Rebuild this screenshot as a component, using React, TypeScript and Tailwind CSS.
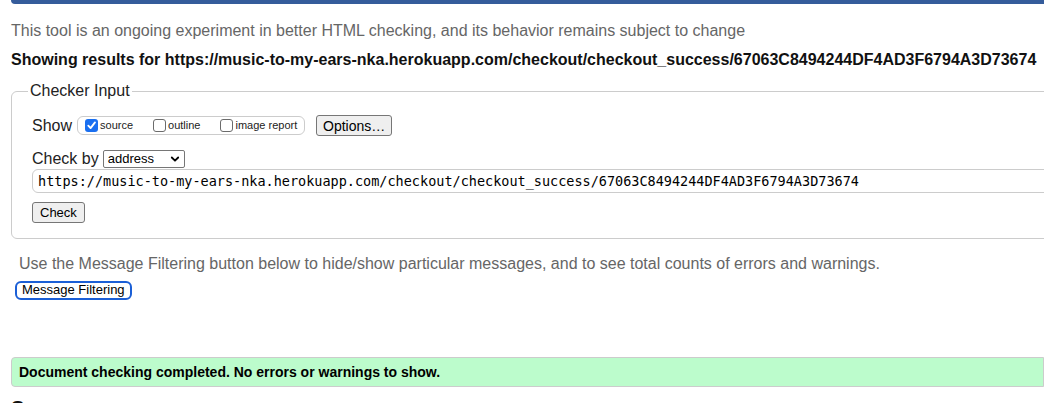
import React from 'react';

const url = 'https://music-to-my-ears-nka.herokuapp.com/checkout/checkout_success/67063C8494244DF4AD3F6794A3D73674';

const Box = ({ checked, label }: { checked?: boolean; label: string }) => (
  <span className="flex items-center">
    {checked
      ? (
          <span className="flex size-[13px] items-center justify-center rounded-[3px] bg-[#1a6ff0]">
            <svg viewBox="0 0 12 12" className="size-[11px]" fill="none" stroke="white" strokeWidth="2" strokeLinecap="round" strokeLinejoin="round">
              <path d="M2.5 6.2 5 8.8 9.8 2.6" />
            </svg>
          </span>
        )
      : <span className="size-[13px] rounded-[3px] border border-[#6b6b6b] bg-white" />}
    <span className="ml-[2px] text-[11px] text-[#222]">{label}</span>
  </span>
);

export default function App() {
  return (
    <div className="h-[403px] w-[1044px] overflow-hidden bg-white font-['Liberation_Sans',Arial,sans-serif] text-[#222]">
      <div className="ml-[11px] h-[4px] rounded-bl-[6px] bg-[#355c9b]" />

      <p className="ml-[11px] mt-[18px] text-[16px] leading-[18px] text-[#666]">
        This tool is an ongoing experiment in better HTML checking, and its behavior remains subject to change
      </p>
      <p className="ml-[11px] mt-[11px] whitespace-nowrap text-[16px] font-bold leading-[18px] text-[#111]">
        Showing results for
        {' '}
        {url}
      </p>

      <fieldset className="ml-[11px] mt-[13px] w-[1080px] rounded-tl-[6px] rounded-bl-[6px] border border-[#ccc] pb-[14px] pl-[20px] pt-[15px]">
        <legend className="ml-[-4px] px-[2px] text-[16px] leading-[18px] text-[#222]">Checker Input</legend>

        <div className="flex items-center">
          <span className="text-[16px] leading-[18px]">Show</span>
          <div className="ml-[5px] flex h-[19px] w-[228px] items-center gap-[20px] rounded-[6px] border border-[#ccc] pl-[7px]">
            <Box checked label="source" />
            <Box label="outline" />
            <Box label="image report" />
          </div>
          <button className="ml-[11px] h-[21px] rounded-[3px] border border-[#767676] bg-[#efefef] px-[6px] text-[14px] leading-[18px] text-black">
            Options…
          </button>
        </div>

        <div className="mt-[14px] flex items-center">
          <span className="text-[16px] leading-[18px]">Check by</span>
          <div className="ml-[4px] flex h-[18px] w-[82px] items-center justify-between rounded-[2px] border border-[#767676] bg-white pl-[4px] pr-[4px] text-[13px] text-black">
            <span>address</span>
            <svg viewBox="0 0 10 10" className="size-[10px]" fill="none" stroke="black" strokeWidth="1.8" strokeLinecap="round" strokeLinejoin="round">
              <path d="M1.8 3.5 5 6.7 8.2 3.5" />
            </svg>
          </div>
        </div>

        <div className="mt-[1px] flex h-[24px] items-center rounded-l-[6px] border border-[#ccc] pl-[5px] font-['DejaVu_Sans_Mono',monospace] text-[13.5px] text-black">
          {url}
        </div>

        <button className="mt-[9px] h-[21px] rounded-[3px] border border-[#767676] bg-[#efefef] px-[7px] text-[13px] leading-[16px] text-black">
          Check
        </button>
      </fieldset>

      <p className="ml-[19px] mt-[16px] text-[16px] leading-[18px] text-[#666]">
        Use the Message Filtering button below to hide/show particular messages, and to see total counts of errors and warnings.
      </p>
      <button className="ml-[15px] mt-[8px] h-[19px] rounded-[6px] border-2 border-[#1b5fd6] bg-white px-[5px] text-[13px] leading-[14px] text-black">
        Message Filtering
      </button>

      <div className="ml-[11px] mt-[56px] flex h-[30px] items-center rounded-l-[4px] border border-[#ccc] bg-[#bcfccc] pl-[7px] text-[14px] font-bold text-black">
        Document checking completed. No errors or warnings to show.
      </div>

      <h2 className="ml-[11px] mt-[9px] text-[20px] font-bold leading-[24px] text-[#111]">Source</h2>
    </div>
  );
}
